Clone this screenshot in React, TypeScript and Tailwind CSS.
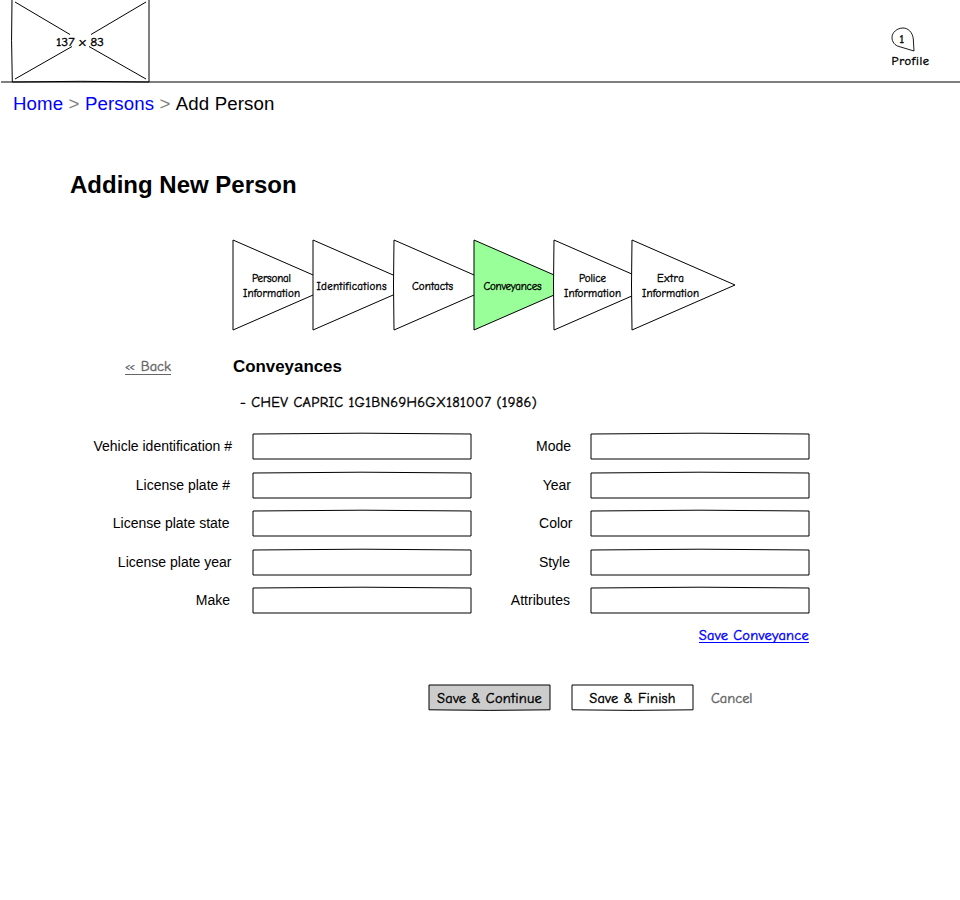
import type { ReactNode } from "react";

const hand = "font-['Comic_Sans_MS','Comic_Neue',Lato,sans-serif] [-webkit-text-stroke:0.4px_currentColor]";
const handSvg = "font-['Comic_Sans_MS','Comic_Neue',Lato,sans-serif] fill-black stroke-black stroke-[0.35px]";
const sans = "font-['Liberation_Sans',Arial,sans-serif]";

type Row = { label: string; pad: string; width: string; gap: string };

const leftFields: Row[] = [
  { label: "Vehicle identification #", pad: "pr-[21px]", width: "w-[253px]", gap: "mb-[14px]" },
  { label: "License plate #", pad: "pr-[23px]", width: "w-[253px]", gap: "mb-[13px]" },
  { label: "License plate state", pad: "pr-[23.5px]", width: "w-[253px]", gap: "mb-[14px]" },
  { label: "License plate year", pad: "pr-[21.5px]", width: "w-[253px]", gap: "mb-[13px]" },
  { label: "Make", pad: "pr-[23px]", width: "w-[253px]", gap: "mb-0" },
];

const rightFields: Row[] = [
  { label: "Mode", pad: "pr-[20px]", width: "w-[120px]", gap: "mb-[14px]" },
  { label: "Year", pad: "pr-[20px]", width: "w-[120px]", gap: "mb-[13px]" },
  { label: "Color", pad: "pr-[18.5px]", width: "w-[120px]", gap: "mb-[14px]" },
  { label: "Style", pad: "pr-[21px]", width: "w-[120px]", gap: "mb-[13px]" },
  { label: "Attributes", pad: "pr-[21px]", width: "w-[120px]", gap: "mb-0" },
];

const steps: { x: number; lines: string[]; cx: number; len: number[]; active?: boolean; bow: number }[] = [
  { x: 1, lines: ["Personal", "Information"], cx: 39.5, len: [39, 57], bow: 0 },
  { x: 81, lines: ["Identifications"], cx: 119.5, len: [70], bow: 0 },
  { x: 162, lines: ["Contacts"], cx: 200.5, len: [41], bow: -1 },
  { x: 242, lines: ["Conveyances"], cx: 280.5, len: [58], active: true, bow: 0 },
  { x: 322, lines: ["Police", "Information"], cx: 360.5, len: [27, 57], bow: -1 },
  { x: 400, lines: ["Extra", "Information"], cx: 438.5, len: [27, 57], bow: -1 },
];

function Field({ row }: { row: Row }) {
  return (
    <label className={`flex h-[25px] items-center ${row.gap}`}>
      <span className={`${row.width} ${row.pad} shrink-0 text-right text-[14px] leading-[25px] whitespace-nowrap`}>
        {row.label}
      </span>
      <svg className="h-[25px] w-[218px] shrink-0 overflow-visible" viewBox="0 0 218 25" fill="#fff" stroke="#000" strokeLinejoin="round">
        <path d="M0 0 Q109 -1.6 218 0 V25 H0 Z" />
      </svg>
    </label>
  );
}

function SketchButton({ fill, children }: { fill: string; children: ReactNode }) {
  return (
    <button className="relative h-[25px] w-[121px]">
      <svg className="absolute inset-0 h-[25px] w-[121px] overflow-visible" viewBox="0 0 121 25" fill={fill} stroke="#000" strokeLinejoin="round">
        <path d="M0 0 H121 V24.8 Q60 26 0 24.8 Z" />
      </svg>
      <span className="relative block text-[14.4px] leading-[27px] tracking-[0.22px] whitespace-nowrap">{children}</span>
    </button>
  );
}

export default function App() {
  return (
    <div className={`h-[900px] w-[960px] overflow-hidden bg-white text-black ${sans}`}>
      <header className="relative flex h-[83px] justify-between pl-[12px]">
        <svg className="absolute inset-0 h-[83px] w-[960px]" viewBox="0 0 960 83" stroke="#000">
          <path d="M1 82 H960" />
        </svg>
        <svg className="relative h-[83px] w-[137px] overflow-visible" viewBox="0 0 137 83" fill="none" stroke="#000">
          <path d="M0 -1 Q-1 40 0.3 82 Q70 80.6 137 82 V-1" />
          <path d="M3 2 L58 34.500 M134 2 L79 34.500 M3 79 L60 46.500 M134 79 L77 46.500" />
          <text x="68" y="46" textAnchor="middle" textLength="48" lengthAdjust="spacingAndGlyphs" className={`text-[12px] font-medium ${handSvg}`}>
            137 x 83
          </text>
        </svg>
        <div className="relative mr-[29px] flex w-[40px] flex-col pt-[27px]">
          <svg className="h-[25px] w-[26px] overflow-visible" viewBox="891 27 26 25" fill="#fff" stroke="#000">
            <path d="M914 51 L913.300 39 C912.500 32 908 28 903 28 C897 28 892 32.500 892 37.500 C892 42 895 45.500 899 46.500 Z" strokeWidth="0.9" />
            <text x="901.800" y="43" textAnchor="middle" className={`text-[12.5px] font-medium ${handSvg}`}>1</text>
          </svg>
          <span className={`ml-[0.5px] text-[12.5px] leading-[18px] font-medium tracking-[0.65px] ${hand}`}>Profile</span>
        </div>
      </header>

      <nav className="flex h-[41px] items-center pl-[13px] text-[18.67px] tracking-[0.12px] whitespace-pre">
        <a className="text-[#0000ff]">Home</a>
        <span className="text-[#808080]">{" > "}</span>
        <a className="text-[#0000ff]">Persons</a>
        <span className="text-[#808080]">{" > "}</span>
        <span>Add Person</span>
      </nav>

      <main>
        <h1 className="mt-[46px] ml-[70px] h-[30px] text-[24px] leading-[30px] font-bold">Adding New Person</h1>

        <svg className="mt-[38px] ml-[232px] h-[94px] w-[506px]" viewBox="0 0 506 94" stroke="#000" strokeLinejoin="round">
          {steps.map((s) => (
            <g key={s.x}>
              <path
                d={`M${s.x} 2 L${s.x + 103} 47 L${s.x} 92 Q${s.x + s.bow} 47 ${s.x} 2 Z`}
                fill={s.active ? "#99ff99" : "#fff"}
              />
              {s.lines.map((line, i) => (
                <text
                  key={line}
                  x={s.cx}
                  y={s.lines.length === 1 ? 52 : 44 + i * 15}
                  textAnchor="middle"
                  textLength={s.len[i]}
                  lengthAdjust="spacing"
                  className={`text-[11px] font-medium ${handSvg}`}
                >
                  {line}
                </text>
              ))}
            </g>
          ))}
        </svg>

        <div className="mt-[24px] flex h-[22px] items-center pl-[125px]">
          <a className={`mr-[62px] flex h-[16px] w-[46px] items-center justify-between border-b border-[#666] text-[14.4px] leading-[16px] font-medium whitespace-nowrap text-[#666] ${hand}`}>
            <span className="text-[10.5px] tracking-[-0.8px]">&lt;&lt;</span>
            <span>Back</span>
          </a>
          <h2 className="text-[16.9px] leading-[22px] font-bold">Conveyances</h2>
        </div>

        <p className={`mt-[15px] ml-[240px] h-[20px] text-[14.4px] leading-[20px] font-medium tracking-[0.34px] whitespace-nowrap ${hand}`}>
          - CHEV CAPRIC 1G1BN69H6GX181007 (1986)
        </p>

        <form className="mt-[21px] flex">
          <div>{leftFields.map((r) => <Field key={r.label} row={r} />)}</div>
          <div>{rightFields.map((r) => <Field key={r.label} row={r} />)}</div>
        </form>

        <div className={`mt-[14px] flex h-[18px] w-[809px] justify-end text-[14.4px] font-medium tracking-[0.27px] ${hand}`}>
          <a className="h-[16px] border-b border-[#0000ff] leading-[17px] text-[#0000ff]">Save Conveyance</a>
        </div>

        <div className={`mt-[40px] flex pl-[429px] font-medium ${hand}`}>
          <SketchButton fill="#cccccc">Save &amp; Continue</SketchButton>
          <span className="w-[22px]" />
          <SketchButton fill="#ffffff">Save &amp; Finish</SketchButton>
          <a className="ml-[18px] text-[14.4px] leading-[27px] text-[#666]">Cancel</a>
        </div>
      </main>
    </div>
  );
}
